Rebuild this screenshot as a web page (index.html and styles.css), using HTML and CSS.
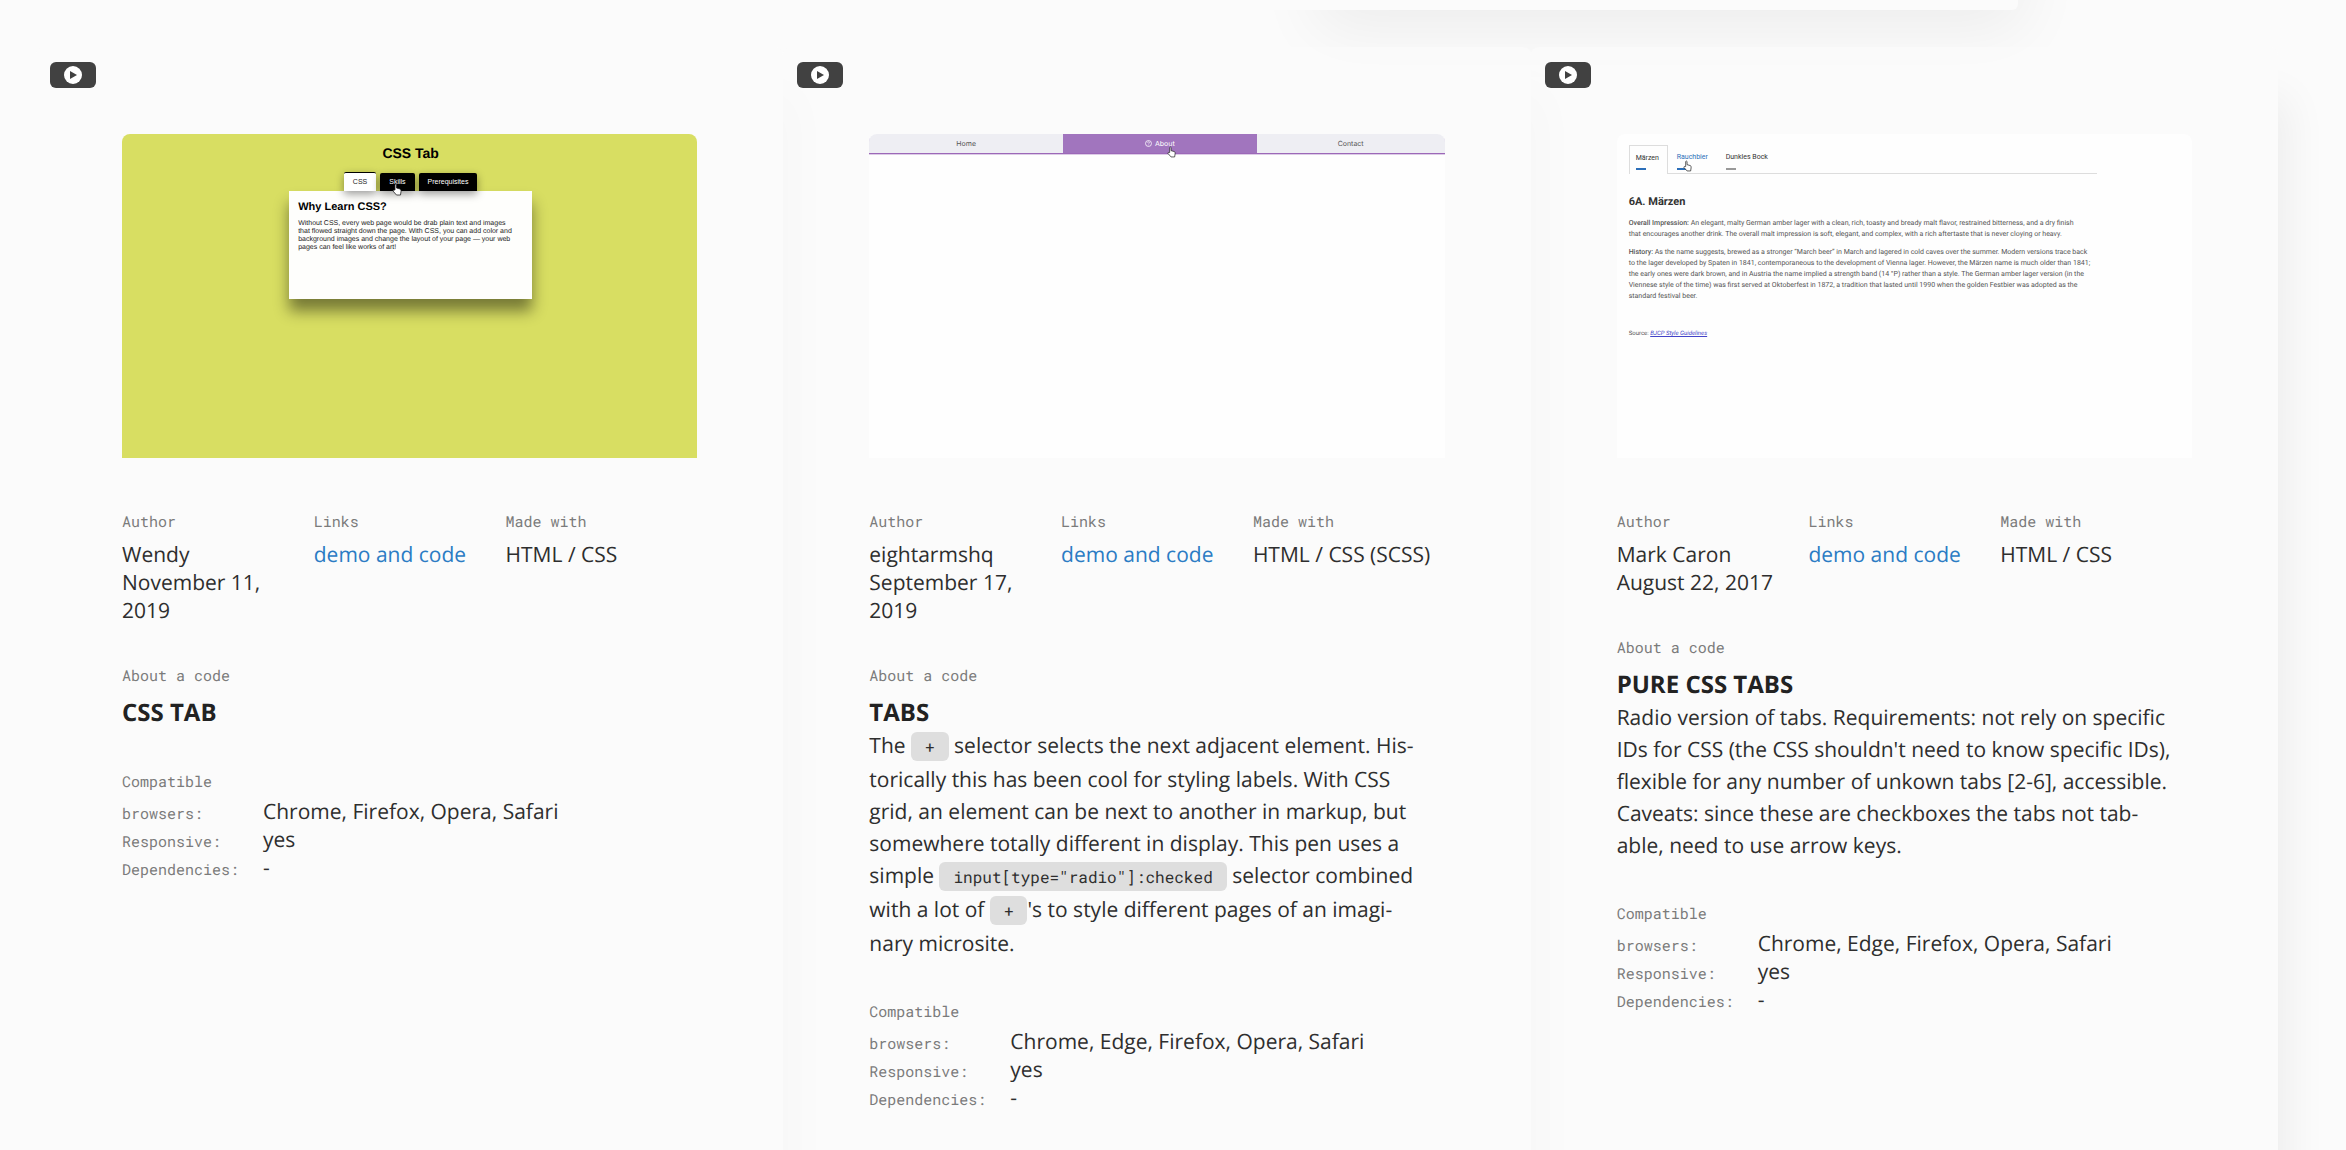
FILE: index.html
```html
<!DOCTYPE html>
<html lang="en">
<head>
<meta charset="utf-8">
<title>CSS Tabs</title>
<link rel="stylesheet" href="styles.css">
</head>
<body>
<main class="page">
  <div class="previous"><section class="tail"></section></div>
  <div class="grid">
    <article class="card">
      <span class="badge"><svg viewBox="0 0 18 18" width="18" height="18"><circle cx="9" cy="9" r="9" fill="#fff"/><path d="M6 5v8l7-4z" fill="#414141"/></svg></span>
      <div class="shot lime">
        <h3 class="lime-title">CSS Tab</h3>
        <div class="lime-tabs"><button class="lime-tab on">CSS</button><button class="lime-tab">Skills<svg class="hand" viewBox="0 0 10 13" width="10" height="13"><path d="M3 7V1.500q1-1 1.500 0V5l3.500 1q1.500.5 1 2.500L8.500 12h-4L1 8q0-1 1-1z" fill="#fff" stroke="#222" stroke-width=".8"/></svg></button><button class="lime-tab">Prerequisites</button></div>
        <div class="lime-panel">
          <h4>Why Learn CSS?</h4>
          <p>Without CSS, every web page would be drab plain text and images<br>that flowed straight down the page. With CSS, you can add color and<br>background images and change the layout of your page — your web<br>pages can feel like works of art!</p>
        </div>
      </div>
      <div class="meta">
        <div><h6>Author</h6><p>Wendy<br>November 11, 2019</p></div>
        <div><h6>Links</h6><p><a href="#demo">demo and code</a></p></div>
        <div><h6>Made with</h6><p>HTML / CSS</p></div>
      </div>
      <section class="about"><h6>About a code</h6><h2>CSS TAB</h2></section>
      <dl class="facts">
        <dt><span>Compatible</span> browsers:</dt><dd>Chrome, Firefox, Opera, Safari</dd>
        <dt>Responsive:</dt><dd>yes</dd>
        <dt>Dependencies:</dt><dd>-</dd>
      </dl>
    </article>

    <article class="card">
      <span class="badge"><svg viewBox="0 0 18 18" width="18" height="18"><circle cx="9" cy="9" r="9" fill="#fff"/><path d="M6 5v8l7-4z" fill="#414141"/></svg></span>
      <div class="shot plain">
        <nav class="bar">
          <a href="#home">Home</a>
          <a href="#about" class="on"><svg viewBox="0 0 8 8" width="7" height="7"><circle cx="4" cy="4" r="3.400" fill="none" stroke="#fff" stroke-width=".9"/><path d="M3 3q0-1 1-1t1 1-1 1.500M4 5.500v.6" fill="none" stroke="#fff" stroke-width=".8"/></svg>About<svg class="hand" viewBox="0 0 10 13" width="9" height="12"><path d="M3 7V1.500q1-1 1.500 0V5l3.500 1q1.500.5 1 2.500L8.500 12h-4L1 8q0-1 1-1z" fill="#fff" stroke="#222" stroke-width=".8"/></svg></a>
          <a href="#contact">Contact</a>
        </nav>
      </div>
      <div class="meta">
        <div><h6>Author</h6><p>eightarmshq<br>September 17, 2019</p></div>
        <div><h6>Links</h6><p><a href="#demo">demo and code</a></p></div>
        <div><h6>Made with</h6><p>HTML / CSS (SCSS)</p></div>
      </div>
      <section class="about"><h6>About a code</h6><h2>TABS</h2>
        <p>The <code>+</code> selector selects the next adjacent element. His-<br>torically this has been cool for styling labels. With CSS<br>grid, an element can be next to another in markup, but<br>somewhere totally different in display. This pen uses a<br>simple <code>input[type="radio"]:checked</code> selector combined<br>with a lot of <code>+</code>'s to style different pages of an imagi-<br>nary microsite.</p>
      </section>
      <dl class="facts">
        <dt><span>Compatible</span> browsers:</dt><dd>Chrome, Edge, Firefox, Opera, Safari</dd>
        <dt>Responsive:</dt><dd>yes</dd>
        <dt>Dependencies:</dt><dd>-</dd>
      </dl>
    </article>

    <article class="card">
      <span class="badge"><svg viewBox="0 0 18 18" width="18" height="18"><circle cx="9" cy="9" r="9" fill="#fff"/><path d="M6 5v8l7-4z" fill="#414141"/></svg></span>
      <div class="shot plain beer">
        <div class="beer-tabs"><button class="on">Märzen</button><button class="hover">Rauchbier<svg class="hand" viewBox="0 0 10 13" width="9" height="12"><path d="M3 7V1.500q1-1 1.500 0V5l3.500 1q1.500.5 1 2.500L8.500 12h-4L1 8q0-1 1-1z" fill="#fff" stroke="#222" stroke-width=".8"/></svg></button><button>Dunkles Bock</button></div>
        <h3>6A. Märzen</h3>
        <p><b>Overall Impression:</b> An elegant, malty German amber lager with a clean, rich, toasty and bready malt flavor, restrained bitterness, and a dry finish<br>that encourages another drink. The overall malt impression is soft, elegant, and complex, with a rich aftertaste that is never cloying or heavy.</p>
        <p><b>History:</b> As the name suggests, brewed as a stronger “March beer” in March and lagered in cold caves over the summer. Modern versions trace back<br>to the lager developed by Spaten in 1841, contemporaneous to the development of Vienna lager. However, the Märzen name is much older than 1841;<br>the early ones were dark brown, and in Austria the name implied a strength band (14 °P) rather than a style. The German amber lager version (in the<br>Viennese style of the time) was first served at Oktoberfest in 1872, a tradition that lasted until 1990 when the golden Festbier was adopted as the<br>standard festival beer.</p>
        <p class="source">Source: <a href="#guide">BJCP Style Guidelines</a></p>
      </div>
      <div class="meta">
        <div><h6>Author</h6><p>Mark Caron<br>August 22, 2017</p></div>
        <div><h6>Links</h6><p><a href="#demo">demo and code</a></p></div>
        <div><h6>Made with</h6><p>HTML / CSS</p></div>
      </div>
      <section class="about"><h6>About a code</h6><h2>PURE CSS TABS</h2>
        <p>Radio version of tabs. Requirements: not rely on specific<br>IDs for CSS (the CSS shouldn't need to know specific IDs),<br>flexible for any number of unkown tabs [2-6], accessible.<br>Caveats: since these are checkboxes the tabs not tab-<br>able, need to use arrow keys.</p>
      </section>
      <dl class="facts">
        <dt><span>Compatible</span> browsers:</dt><dd>Chrome, Edge, Firefox, Opera, Safari</dd>
        <dt>Responsive:</dt><dd>yes</dd>
        <dt>Dependencies:</dt><dd>-</dd>
      </dl>
    </article>
  </div>
</main>
</body>
</html>
```

FILE: styles.css
```css
* { box-sizing: border-box; }
body {
  margin: 0;
  background: #fbfbfb;
  color: #2e2e2e;
  font: 21px/28px "Open Sans", "Noto Sans", sans-serif;
  text-rendering: geometricPrecision;
}
h2, h3, h4, h6, p, dl, dd { margin: 0; }
a { color: #2b7cc4; text-decoration: none; }
button { font: inherit; border: 0; margin: 0; padding: 0; color: inherit; background: none; }

.page { padding: 0 68px 0 36px; height: 100vh; overflow: hidden; }
.previous { display: flex; justify-content: flex-end; height: 47px; padding-right: 260px; }
.tail {
  width: 747px;
  height: 300px;
  margin-top: -290px;
  border-radius: 6px;
  background: #fbfbfb;
  box-shadow: 25px 40px 60px -20px rgba(0, 0, 0, .06);
}
.grid { display: grid; grid-template-columns: repeat(3, 1fr); min-height: 100vh; }
.card {
  position: relative;
  padding: 87px 86px 0;
  border-radius: 8px;
  background: rgba(251, 251, 251, .7);
  box-shadow: 30px 30px 40px -20px rgba(0, 0, 0, .06);
}
.badge {
  position: absolute;
  left: 14px;
  top: 15px;
  display: flex;
  align-items: center;
  justify-content: center;
  width: 46px;
  height: 26px;
  border-radius: 6px;
  background: #414141;
}
.shot { height: 324px; border-radius: 8px 8px 0 0; overflow: hidden; }
.hand { position: absolute; }

.lime {
  background: #d8de62;
  color: #000;
  font-family: "Liberation Sans", Arial, sans-serif;
  display: flex;
  flex-direction: column;
  align-items: center;
  padding-left: 2px;
}
.lime-title { margin-top: 11px; font-size: 14px; line-height: 16px; }
.lime-tabs { display: flex; gap: 4px; align-items: flex-end; margin-top: 11px; height: 19px; }
.lime-tab {
  position: relative;
  height: 18px;
  padding: 0 9px;
  border-radius: 2px 2px 0 0;
  background: #000;
  color: #fff;
  font-size: 7px;
  line-height: 16px;
  box-shadow: 0 3px 8px rgba(0, 0, 0, .4);
}
.lime-tab.on { height: 19px; border-top: 1px solid #000; background: #fff; color: #222; }
.lime-tab .hand { left: 12px; top: 10px; z-index: 2; }
.lime-panel {
  width: 243px;
  height: 108px;
  padding: 8px 9px;
  background: #fefefc;
  box-shadow: 0 12px 14px rgba(0, 0, 0, .45);
}
.lime-panel h4 { font-size: 11px; line-height: 16px; }
.lime-panel p { margin-top: 5px; font-size: 7px; line-height: 8px; color: #222; white-space: nowrap; }

.plain { background: #fefefe; }
.bar {
  display: grid;
  grid-template-columns: 34fr 34fr 33fr;
  height: 20px;
  border-bottom: 1px solid #9c68b8;
  background: #eeeef3;
  box-shadow: 0 1px 0 #dccbe6;
}
.bar a {
  position: relative;
  display: flex;
  align-items: center;
  justify-content: center;
  gap: 3px;
  color: #555;
  font: 7px/18px Inter, sans-serif;
}
.bar .on { background: #a175be; color: #fff; }
.bar .hand { left: 104px; top: 12px; }

.beer { padding: 11px 0 0 12px; color: #555; font-family: Roboto, sans-serif; }
.beer-tabs { display: flex; width: 468px; height: 29px; border-bottom: 1px solid #ddd; }
.beer-tabs button {
  position: relative;
  padding: 0 9px 4px;
  color: #333;
  font-size: 7px;
  line-height: 16px;
  text-align: left;
}
.beer-tabs button::after {
  content: "";
  position: absolute;
  left: 9px;
  top: 23px;
  width: 10px;
  height: 2px;
  background: #999;
}
.beer-tabs .on { width: 39px; padding: 0 6px 4px; border: 1px solid #ddd; border-bottom: 0; background: #fefefe; height: 29px; }
.beer-tabs .on::after { left: 6px; top: 22px; background: #2c6fb9; }
.beer-tabs .hover { width: 49px; color: #2c6fb9; }
.beer-tabs .hover::after { background: #2c6fb9; }
.beer-tabs .hand { left: 15px; top: 15px; z-index: 2; }
.beer h3 { margin-top: 19px; color: #333; font-size: 11px; line-height: 18px; }
.beer p { margin-top: 7px; font-size: 7px; line-height: 11px; white-space: nowrap; }
.beer b { font-weight: 500; }
.beer .source { margin-top: 26px; font-size: 6px; }
.source a { color: #4343c8; font-style: italic; text-decoration: underline; }

h6, .facts dt { color: #7b7b7b; font: 15px/20px "Roboto Mono", "Liberation Mono", monospace; }
.meta { display: grid; grid-template-columns: repeat(3, 1fr); margin-top: 54px; }
.meta p { margin-top: 9px; }
.meta > div { padding-right: 12px; }
.meta > div:last-child { padding-right: 0; white-space: nowrap; }
.about { margin-top: 41px; }
.about h2 { margin-top: 10px; color: #222; font-size: 24px; line-height: 34px; }
.about p { line-height: 32px; white-space: nowrap; }
code {
  display: inline-block;
  margin-bottom: 3px;
  padding: 3px 14px 0;
  border-radius: 6px;
  background: #dedede;
  font: 16px/26px "Roboto Mono", "Liberation Mono", monospace;
}
.facts { display: grid; grid-template-columns: 141px 1fr; margin-top: 41px; align-items: last baseline; }
.facts dt { line-height: 22px; }
.facts dd { height: 28px; }
.facts dt span { display: block; margin-bottom: 10px; }
```
